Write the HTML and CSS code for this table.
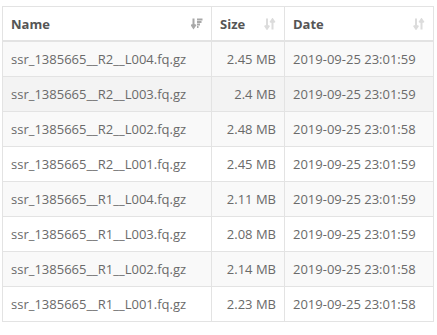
FILE: index.html
```html
<!DOCTYPE html>
<html lang="en">
<head>
    <meta charset="UTF-8">
    <title>Files</title>
    <link rel="stylesheet" href="styles.css">
</head>
<body>
    <table class="files">
        <thead>
            <tr>
                <th class="col-name">Name
                    <svg class="sort active" viewBox="0 0 12 12"><path d="M2.5 0.5v8.5M0.3 6.5l2.2 3.2 2.2-3.2" /><path d="M6 1.5h5.5M6 4h4.5M6 6.5h3M6 9h1.5" /></svg>
                </th>
                <th class="col-size">Size
                    <svg class="sort" viewBox="0 0 12 12"><path d="M3 0.5v10M0.8 7.5l2.2 3.2 2.2-3.2" /><path d="M8.5 11.5V1.5M6.3 4.5l2.2-3.2 2.2 3.2" /></svg>
                </th>
                <th class="col-date">Date
                    <svg class="sort" viewBox="0 0 12 12"><path d="M3 0.5v10M0.8 7.5l2.2 3.2 2.2-3.2" /><path d="M8.5 11.5V1.5M6.3 4.5l2.2-3.2 2.2 3.2" /></svg>
                </th>
            </tr>
        </thead>
        <tbody>
            <tr><td>ssr_1385665__R2__L004.fq.gz</td><td class="num">2.45 MB</td><td>2019-09-25 23:01:59</td></tr>
            <tr class="hover"><td>ssr_1385665__R2__L003.fq.gz</td><td class="num">2.4 MB</td><td>2019-09-25 23:01:59</td></tr>
            <tr><td>ssr_1385665__R2__L002.fq.gz</td><td class="num">2.48 MB</td><td>2019-09-25 23:01:58</td></tr>
            <tr><td>ssr_1385665__R2__L001.fq.gz</td><td class="num">2.45 MB</td><td>2019-09-25 23:01:59</td></tr>
            <tr><td>ssr_1385665__R1__L004.fq.gz</td><td class="num">2.11 MB</td><td>2019-09-25 23:01:59</td></tr>
            <tr><td>ssr_1385665__R1__L003.fq.gz</td><td class="num">2.08 MB</td><td>2019-09-25 23:01:59</td></tr>
            <tr><td>ssr_1385665__R1__L002.fq.gz</td><td class="num">2.14 MB</td><td>2019-09-25 23:01:58</td></tr>
            <tr><td>ssr_1385665__R1__L001.fq.gz</td><td class="num">2.23 MB</td><td>2019-09-25 23:01:58</td></tr>
        </tbody>
    </table>
</body>
</html>
```

FILE: styles.css
```css
body {
    margin: 0;
    padding: 6px 3px 0 2px;
    font-family: "Open Sans", "Liberation Sans", sans-serif;
    font-size: 13px;
    color: #6a6a6a;
    background: #fff;
}
.files {
    width: 432px;
    border-collapse: collapse;
    border: 1px solid #e3e3e3;
}
.files th, .files td {
    border: 1px solid #e3e3e3;
    padding: 0 8px;
    height: 34px;
    text-align: left;
    white-space: nowrap;
}
.files th {
    position: relative;
    color: #555;
    font-weight: 700;
    border-bottom-width: 2px;
    height: 33px;
}
.col-name { width: 192px; }
.col-size { width: 56px; }
.files td.num {
    text-align: right;
}
.files tbody tr:nth-child(odd) {
    background-color: #f9f9f9;
}
.files tbody tr.hover {
    background-color: #f3f3f3;
}
.sort {
    position: absolute;
    right: 8px;
    top: 11px;
    width: 12px;
    height: 12px;
    fill: none;
    stroke: #dcdcdc;
    stroke-width: 2;
}
.sort.active {
    stroke: #a8a8a8;
}
```
